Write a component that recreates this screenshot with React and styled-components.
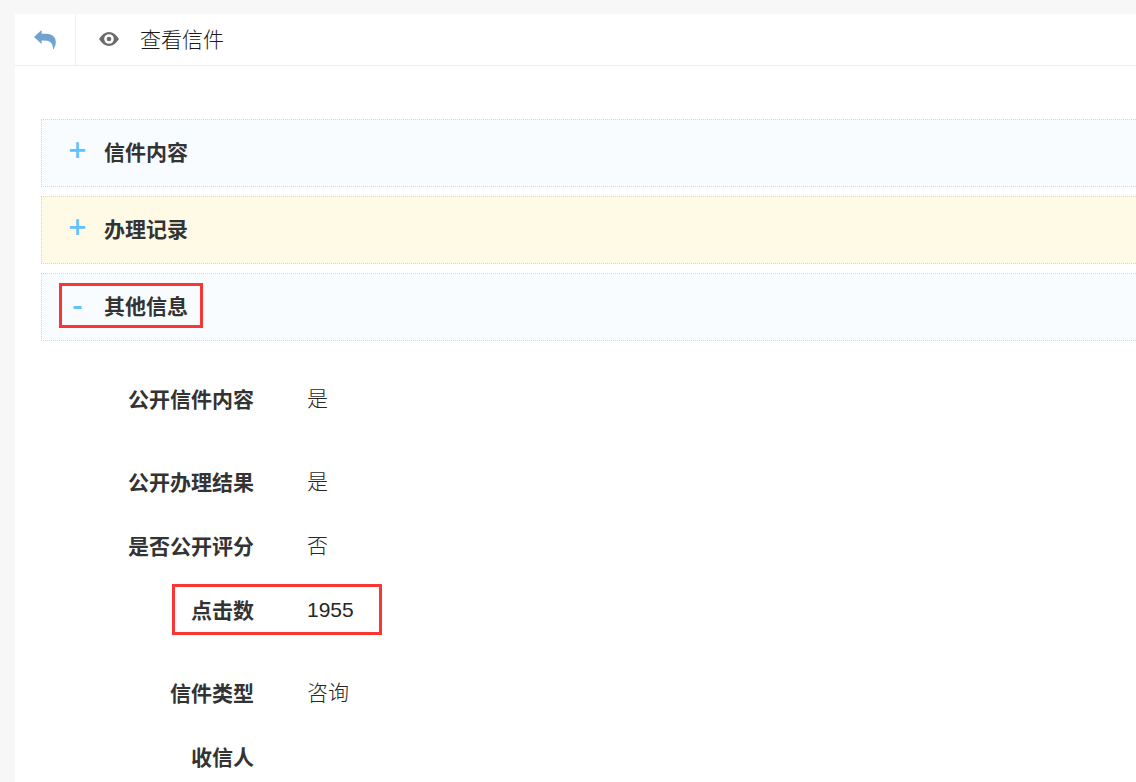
import { useState } from "react";
import styled, { createGlobalStyle } from "styled-components";

const sections = [
  { id: "content", title: "信件内容" },
  { id: "records", title: "办理记录", warm: true },
  { id: "other", title: "其他信息", marked: true },
];

const details = [
  { label: "公开信件内容", value: "是", spaced: true },
  { label: "公开办理结果", value: "是" },
  { label: "是否公开评分", value: "否" },
  { label: "点击数", value: "1955", marked: true, spaced: true },
  { label: "信件类型", value: "咨询" },
  { label: "收信人", value: "" },
];

const App = () => {
  const [open, setOpen] = useState("other");

  return (
    <Page>
      <GlobalStyle />
      <Panel>
        <Header>
          <BackButton type="button" aria-label="返回">
            <svg width="22" height="20" viewBox="0 0 22 20" fill="currentColor">
              <path d="M0 7 7.6 0V3.8H10.5C17.5 3.8 21.8 6.4 21.8 12 21.8 14.8 20.8 17.2 19.6 19.2H19C19 13.4 16.4 10.6 10.5 10.6H7.6V14Z" />
            </svg>
          </BackButton>
          <PageTitle>
            <svg width="20" height="16" viewBox="0 0 20 16" aria-hidden="true">
              <path
                fill="currentColor"
                fillRule="evenodd"
                d="M0 7C3 2.3 6.2 0 10 0S17 2.3 20 7C17 11.7 13.8 14 10 14S3 11.7 0 7ZM10 2.2A4.8 4.8 0 1 0 10 11.8 4.8 4.8 0 1 0 10 2.2Z"
              />
              <circle cx="10" cy="7" r="2.3" fill="currentColor" />
            </svg>
            查看信件
          </PageTitle>
        </Header>
        <Content>
          {sections.map((section) => (
            <SectionBar key={section.id} $warm={section.warm}>
              <Toggle
                type="button"
                aria-expanded={open === section.id}
                $marked={section.marked}
                onClick={() => setOpen(open === section.id ? "" : section.id)}
              >
                <Sign>{open === section.id ? "-" : "+"}</Sign>
                {section.title}
              </Toggle>
            </SectionBar>
          ))}
          {open === "other" && (
            <DetailList>
              {details.map((item) => (
                <DetailRow key={item.label} $spaced={item.spaced}>
                  <DetailPair $marked={item.marked}>
                    <Label>{item.label}</Label>
                    <Value>{item.value}</Value>
                  </DetailPair>
                </DetailRow>
              ))}
            </DetailList>
          )}
        </Content>
      </Panel>
    </Page>
  );
};

export default App;

// Styled Components
const GlobalStyle = createGlobalStyle`
  * {
    box-sizing: border-box;
  }

  body {
    margin: 0;
    background: #f7f7f7;
    color: #333333;
    font-family: "Liberation Sans", "Noto Sans CJK SC", sans-serif;
    font-size: 21px;
    line-height: 30px;
  }

  button {
    border: 0;
    padding: 0;
    background: none;
    font: inherit;
    cursor: pointer;
  }
`;

const Page = styled.div`
  min-height: 100vh;
  padding: 14px 0 0 15px;
`;

const Panel = styled.main`
  background: #ffffff;
`;

const Header = styled.header`
  display: flex;
  height: 52px;
  border-bottom: 1px solid #eeeeee;
`;

const BackButton = styled.button`
  display: flex;
  align-items: center;
  justify-content: center;
  width: 61px;
  padding-right: 1px;
  border-right: 1px solid #f0f0f0;
  color: #71a2d0;
`;

const PageTitle = styled.h1`
  display: flex;
  align-items: center;
  gap: 21px;
  margin: 0;
  padding-left: 23px;
  color: #1a1a1a;
  font-size: 21px;
  font-weight: 300;

  svg {
    color: #6b6b6b;
  }
`;

const Content = styled.div`
  padding: 53px 0 0 26px;
`;

const SectionBar = styled.h2`
  display: flex;
  align-items: center;
  height: 68px;
  margin: 0 0 9px;
  padding-left: 17px;
  border: 1px dotted #c8dcec;
  border-right: 0;
  background: ${(props) => (props.$warm ? "#fffae6" : "#f8fcff")};
  font-size: 21px;
`;

// Red frame drawn over an item without taking up room
const marker = (inset) => `
  &::after {
    content: "";
    position: absolute;
    inset: ${inset};
    border: 3px solid #fa3534;
    pointer-events: none;
  }
`;

const Toggle = styled.button`
  position: relative;
  display: flex;
  align-items: flex-start;
  color: #333333;
  font-weight: 700;

  ${(props) => props.$marked && marker("-9px -15px -6px 0")}
`;

const Sign = styled.span`
  width: 37px;
  margin-right: 8px;
  color: #5fc1ff;
  font-family: "Noto Sans", sans-serif;
  font-size: 32px;
  font-weight: 500;
  line-height: 24px;
  text-align: center;
`;

const DetailList = styled.dl`
  margin: 0;
  padding-top: 18px;
`;

const DetailRow = styled.div`
  display: flex;
  align-items: center;
  height: 64px;
  margin-bottom: ${(props) => (props.$spaced ? "19px" : "0")};
`;

const DetailPair = styled.div`
  position: relative;
  display: flex;
  gap: 53px;

  ${(props) => props.$marked && marker("-12px -28px -9px 131px")}
`;

const Label = styled.dt`
  width: 213px;
  font-weight: 700;
  text-align: right;
`;

const Value = styled.dd`
  margin: 0;
  color: #262626;
  font-weight: 300;
  line-height: 28px;
`;
